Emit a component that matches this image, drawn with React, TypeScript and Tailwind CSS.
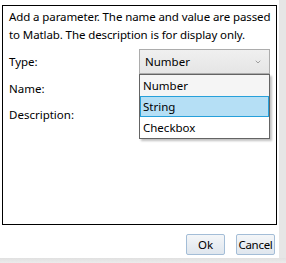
import { ChevronDown } from 'lucide-react';

const options = ['Number', 'String', 'Checkbox'];

export default function App() {
  const selected = 'String';

  return (
    <div
      className="relative flex h-[263px] w-[286px] flex-col overflow-hidden bg-white text-[11.5px] text-black"
      style={{ fontFamily: '"Noto Sans", "Open Sans", sans-serif' }}
    >
      <div className="flex flex-1">
        <div className="flex w-[279px] flex-col">
          <div className="mx-[2px] mt-[5px] h-[220px] border border-black px-[6px] pt-[2px]">
            <p className="whitespace-nowrap leading-[18px] tracking-[-0.1px]">
              Add a parameter. The name and value are passed
              <br />
              to Matlab. The description is for display only.
            </p>

            <div className="mt-[5px] grid grid-cols-[130px_1fr] items-center gap-y-[3px]">
              <span className="leading-[25px]">Type:</span>
              <div className="relative">
                <div className="flex h-[25px] items-center justify-between border border-[#acacac] bg-gradient-to-b from-[#f0f0f0] to-[#e5e5e5] pl-[5px] pr-[7px]">
                  <span>Number</span>
                  <ChevronDown size={8} strokeWidth={1.5} className="text-[#555]" />
                </div>
                <ul className="absolute left-0 right-0 top-[25px] z-10 border border-[#646464] bg-white shadow-[2px_2px_2px_rgba(0,0,0,0.25)]">
                  {options.map((opt) => (
                    <li
                      key={opt}
                      className={
                        opt === selected
                          ? 'h-[21px] border border-[#26a0da] bg-[#b5dff5] px-[2px] leading-[19px]'
                          : opt === 'Number'
                            ? 'h-[21px] bg-[#f5f5f5] px-[3px] leading-[21px]'
                            : 'h-[21px] px-[3px] leading-[21px]'
                      }
                    >
                      {opt}
                    </li>
                  ))}
                </ul>
              </div>
              <span className="leading-[23px]">Name:</span>
              <div className="h-[23px]" />
              <span className="leading-[23px]">Description:</span>
              <div className="h-[23px]" />
            </div>
          </div>

          <div className="mt-[9px] flex justify-end gap-[11px] pr-[4px]">
            <button
              type="button"
              className="h-[21px] w-[39px] rounded-[2px] border border-[#a3bdd7] bg-gradient-to-b from-[#f4f6f8] to-[#dfe6ee] leading-[19px]"
            >
              Ok
            </button>
            <button
              type="button"
              className="h-[21px] w-[39px] rounded-[2px] border border-[#a3bdd7] bg-gradient-to-b from-[#f4f6f8] to-[#dfe6ee] px-0 leading-[19px] tracking-[-0.3px]"
            >
              Cancel
            </button>
          </div>
        </div>
        <div className="w-[7px] bg-[#e6e6e6]" />
      </div>
      <div className="h-[5px] bg-gradient-to-b from-[#e0e0e0] to-[#ececec]" />
    </div>
  );
}
